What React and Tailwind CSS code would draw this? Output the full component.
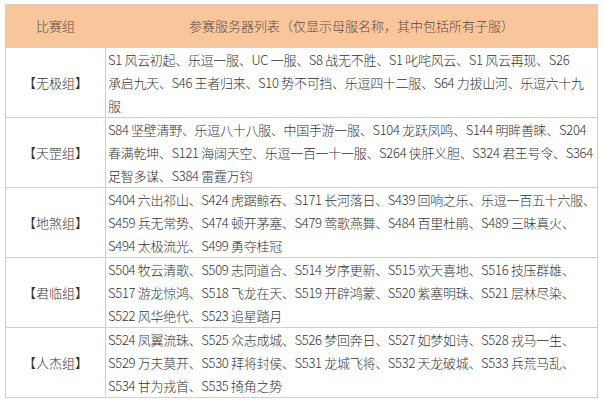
import React from "react";

const rows = [
  {
    group: "【无极组】",
    lines: [
      "S1 风云初起、乐逗一服、UC 一服、S8 战无不胜、S1 叱咤风云、S1 风云再现、S26",
      "承启九天、S46 王者归来、S10 势不可挡、乐逗四十二服、S64 力拔山河、乐逗六十九",
      "服",
    ],
  },
  {
    group: "【天罡组】",
    lines: [
      "S84 坚壁清野、乐逗八十八服、中国手游一服、S104 龙跃凤鸣、S144 明眸善睐、S204",
      "春满乾坤、S121 海阔天空、乐逗一百一十一服、S264 侠肝义胆、S324 君王号令、S364",
      "足智多谋、S384 雷霆万钧",
    ],
  },
  {
    group: "【地煞组】",
    lines: [
      "S404 六出祁山、S424 虎踞鲸吞、S171 长河落日、S439 回响之乐、乐逗一百五十六服、",
      "S459 兵无常势、S474 顿开茅塞、S479 莺歌燕舞、S484 百里杜鹃、S489 三昧真火、",
      "S494 太极流光、S499 勇夺桂冠",
    ],
  },
  {
    group: "【君临组】",
    lines: [
      "S504 牧云清歌、S509 志同道合、S514 岁序更新、S515 欢天喜地、S516 技压群雄、",
      "S517 游龙惊鸿、S518 飞龙在天、S519 开辟鸿蒙、S520 紫塞明珠、S521 层林尽染、",
      "S522 风华绝代、S523 追星踏月",
    ],
  },
  {
    group: "【人杰组】",
    lines: [
      "S524 凤翼流珠、S525 众志成城、S526 梦回奔日、S527 如梦如诗、S528 戎马一生、",
      "S529 万夫莫开、S530 拜将封侯、S531 龙城飞将、S532 天龙破城、S533 兵荒马乱、",
      "S534 甘为戎首、S535 掎角之势",
    ],
  },
];

export default function App() {
  return (
    <div
      className="w-[604px] h-[400px] bg-white pl-[5px] pt-[4px] overflow-hidden"
      style={{ fontFamily: '"Noto Sans CJK SC", "Noto Sans", sans-serif' }}
    >
      <table className="w-[593px] border-collapse table-fixed text-[13px] font-light text-[#333333]">
        <colgroup>
          <col className="w-[100px]" />
          <col />
        </colgroup>
        <thead>
          <tr className="h-[43px] bg-[#f9c69b] text-[#5a4a42]">
            <th className="border border-[#cfcfcf] font-light text-center">比赛组</th>
            <th className="border border-[#cfcfcf] font-light text-center">
              参赛服务器列表（仅显示母服名称，其中包括所有子服）
            </th>
          </tr>
        </thead>
        <tbody>
          {rows.map((row) => (
            <tr key={row.group} className="h-[69px]">
              <td className="border border-[#cfcfcf] text-center align-middle">{row.group}</td>
              <td className="border border-[#cfcfcf] pl-[2px] align-middle leading-[23px] overflow-hidden">
                {row.lines.map((line, i) => (
                  <div key={i} className="whitespace-nowrap tracking-[-0.3px]">
                    {line}
                  </div>
                ))}
              </td>
            </tr>
          ))}
        </tbody>
      </table>
    </div>
  );
}
